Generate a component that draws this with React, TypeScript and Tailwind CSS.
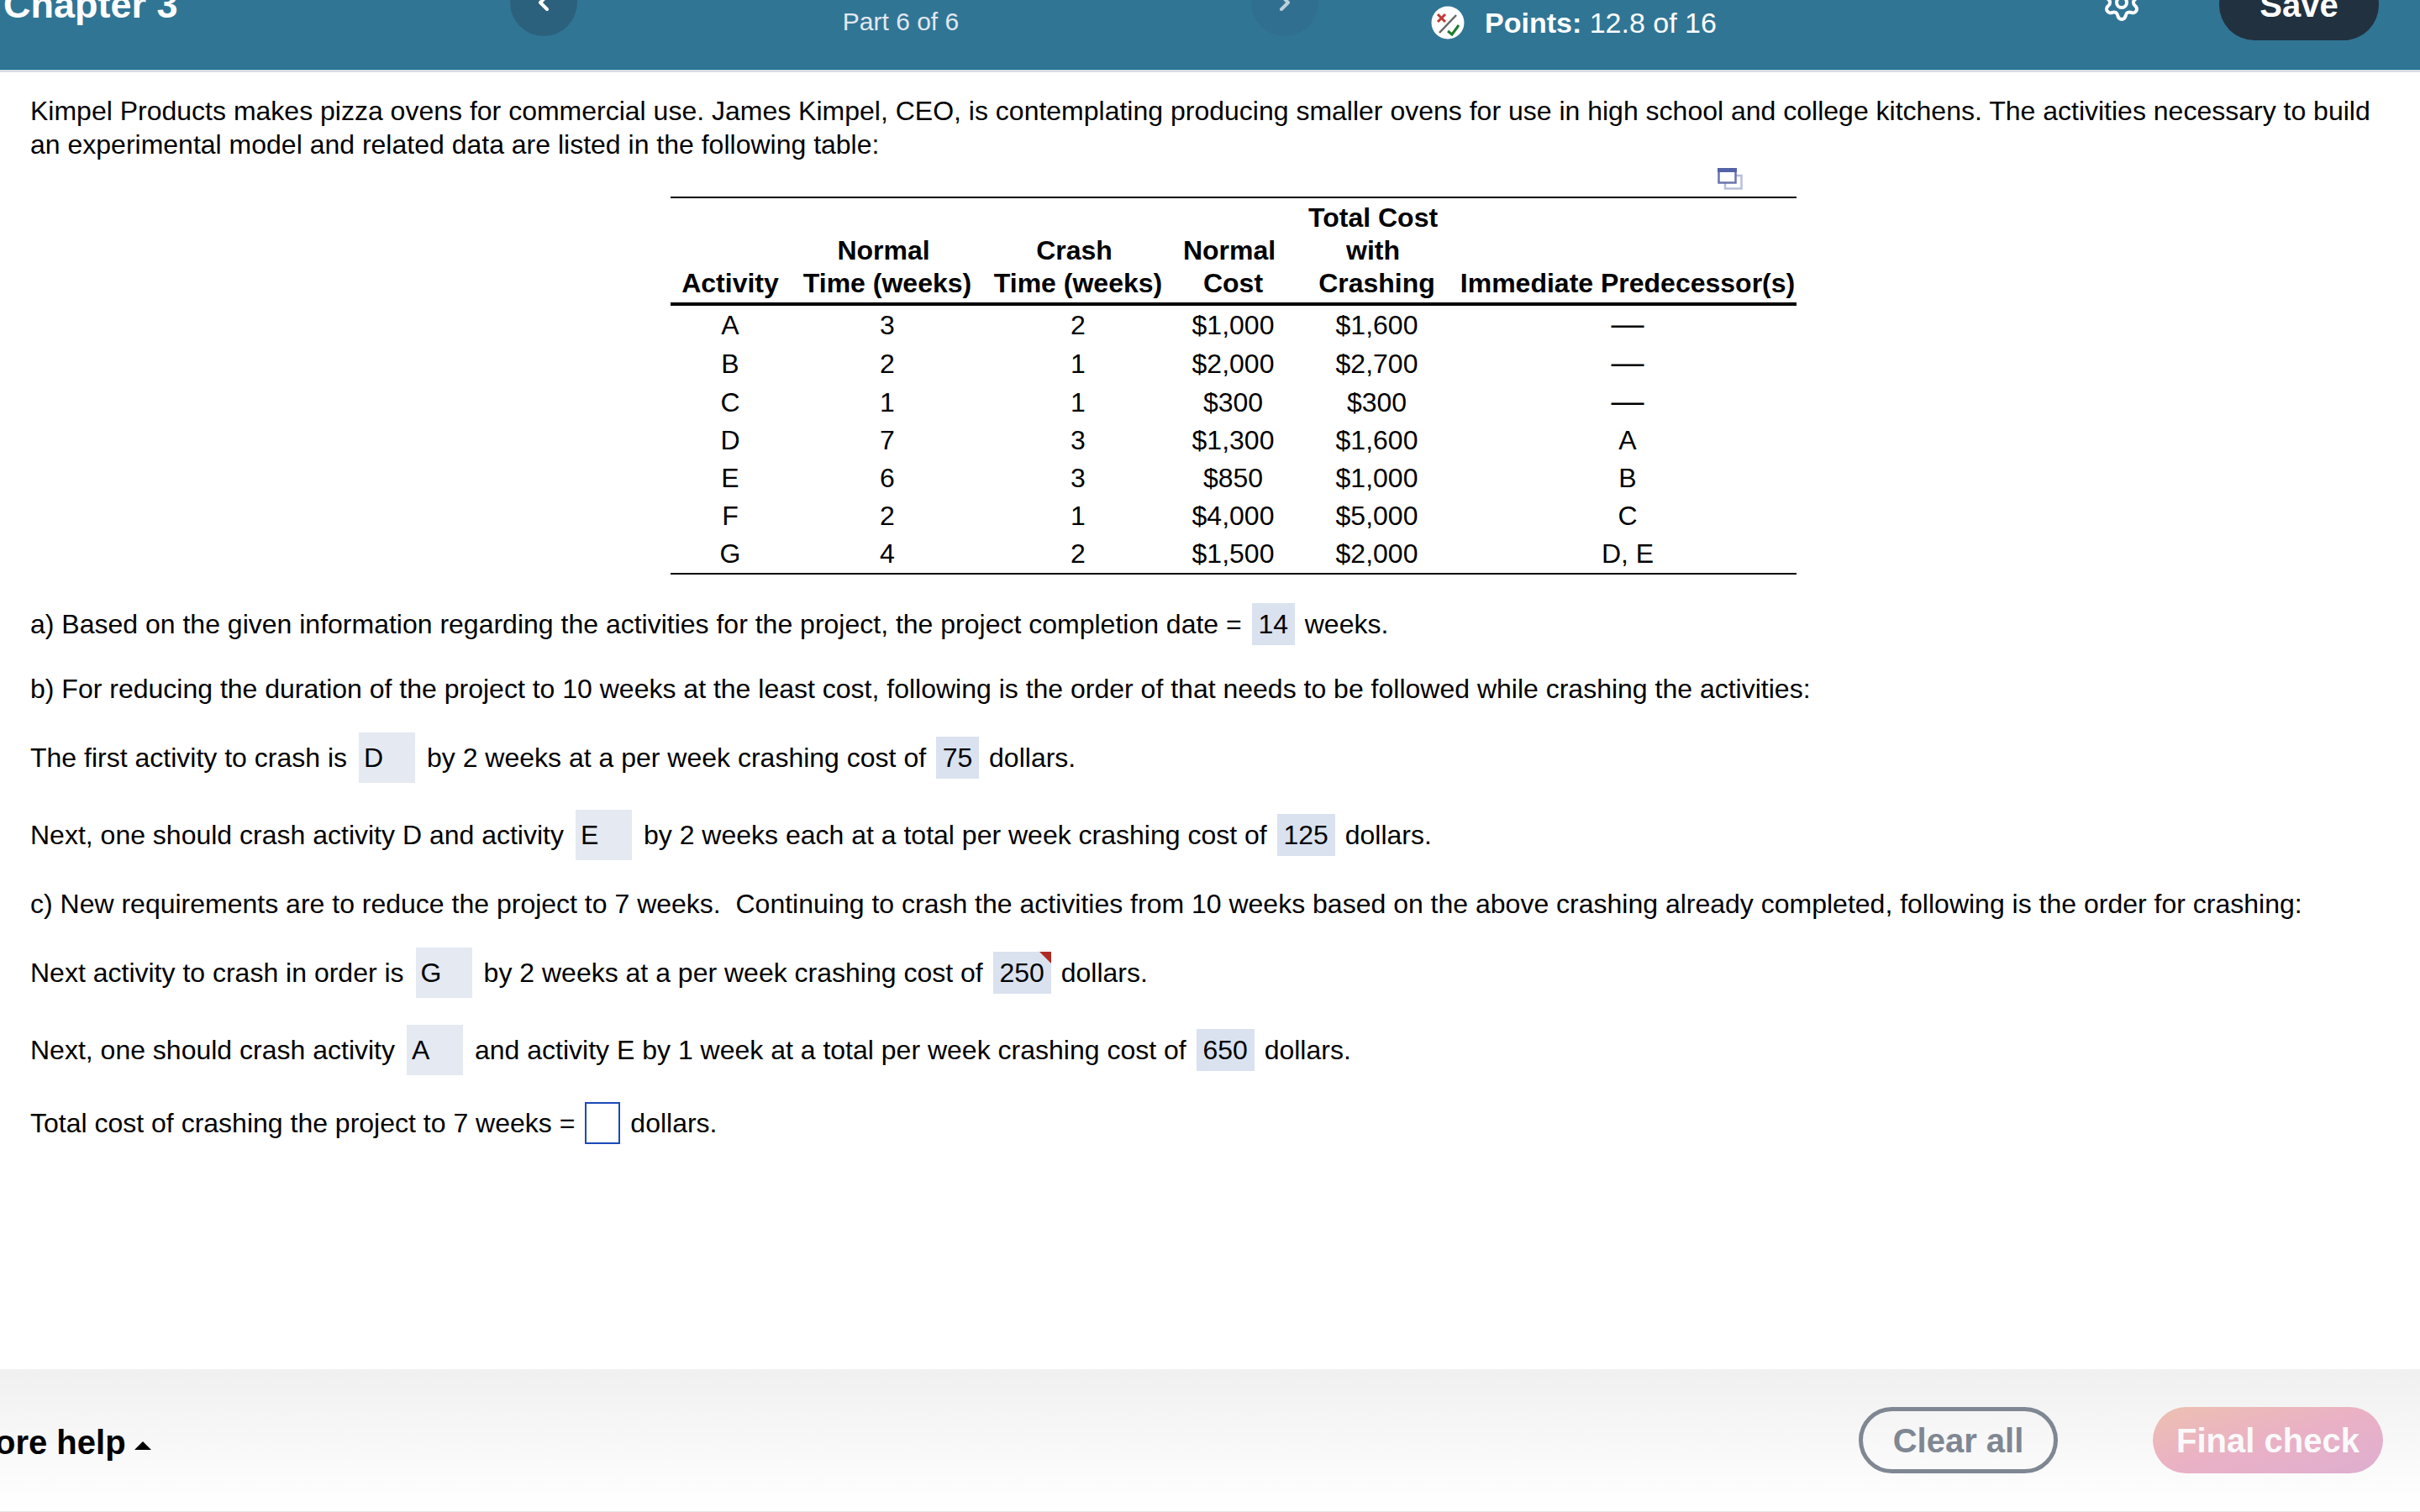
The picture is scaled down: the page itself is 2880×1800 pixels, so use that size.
import type { ReactNode } from "react";
import { ChevronLeft, ChevronRight, Settings } from "lucide-react";

const activities = [
  { id: "A", normal: 3, crash: 2, cost: "$1,000", crashCost: "$1,600", pred: "—" },
  { id: "B", normal: 2, crash: 1, cost: "$2,000", crashCost: "$2,700", pred: "—" },
  { id: "C", normal: 1, crash: 1, cost: "$300", crashCost: "$300", pred: "—" },
  { id: "D", normal: 7, crash: 3, cost: "$1,300", crashCost: "$1,600", pred: "A" },
  { id: "E", normal: 6, crash: 3, cost: "$850", crashCost: "$1,000", pred: "B" },
  { id: "F", normal: 2, crash: 1, cost: "$4,000", crashCost: "$5,000", pred: "C" },
  { id: "G", normal: 4, crash: 2, cost: "$1,500", crashCost: "$2,000", pred: "D, E" },
];

function Header() {
  return (
    <header className="h-[83px] overflow-hidden border-b border-[#0f6f90] bg-[#317595] text-white shadow-[0_3px_0_#dadce4]">
      <div className="-mt-[42px] grid h-[90px] grid-cols-[607fr_962fr_1311fr] items-center">
        <h1 className="pl-1 pt-1 text-[45px] font-bold leading-none">Chapter 3</h1>

        <nav className="flex items-center justify-between">
          <button
            aria-label="Previous part"
            className="grid h-20 w-20 place-items-center rounded-full bg-[#2c617d]"
          >
            <ChevronLeft className="h-8 w-8" strokeWidth={3} />
          </button>
          <p className="pr-8 pt-[46px] text-[30px] leading-none text-[#e1e8f1]">
            Part 6 of 6
          </p>
          <button
            aria-label="Next part"
            className="grid h-20 w-20 place-items-center rounded-full bg-[#306f8f] text-[#b9d0dc]"
          >
            <ChevronRight className="h-8 w-8" strokeWidth={3} />
          </button>
        </nav>

        <div className="flex h-full items-center justify-between pl-[134px] pr-[49px]">
          <div className="flex items-center gap-6 pt-[47px]">
            <PointsIcon />
            <p className="text-[34px] leading-none">
              <b>Points:</b> 12.8 of 16
            </p>
          </div>
          <div className="flex h-full items-center gap-[92px]">
            <button aria-label="Settings">
              <Settings className="h-12 w-12" strokeWidth={2} />
            </button>
            <button className="h-[84px] w-[190px] self-end rounded-full bg-[#213140] text-[40px] font-bold leading-none">
              Save
            </button>
          </div>
        </div>
      </div>
    </header>
  );
}

function PointsIcon() {
  return (
    <svg viewBox="0 0 40 40" className="h-10 w-10" fill="none" aria-hidden="true">
      <circle cx="20" cy="20" r="19.5" fill="#fff" />
      <path d="M10 32 30 11" stroke="#666" strokeWidth="2.5" />
      <path d="m8 10 9 9m0-9-9 9" stroke="#c03a35" strokeWidth="3" />
      <path d="m20 30 5 4 8-11" stroke="#1f7d2f" strokeWidth="3" />
    </svg>
  );
}

function PopupIcon() {
  return (
    <svg viewBox="0 0 30 26" className="h-[26px] w-[30px]" fill="none" aria-hidden="true">
      <rect x="9" y="9" width="19.5" height="15.5" fill="#fff" stroke="#b9bedd" strokeWidth="2.5" />
      <rect x="1.5" y="1.5" width="20" height="16" fill="#fff" stroke="#6a74b0" strokeWidth="2.5" />
      <path d="M0 2.5h23" stroke="#5462a6" strokeWidth="5" />
    </svg>
  );
}

function ActivityTable() {
  return (
    <div className="flex flex-col items-center pl-14">
      <div>
        <div className="flex h-[42px] items-center justify-end pr-16">
          <button aria-label="Open table in a new window">
            <PopupIcon />
          </button>
        </div>
        <table className="w-[1340px] table-fixed border-separate border-spacing-0 border-y-2 border-black text-center">
          <colgroup>
            <col className="w-[142px]" />
            <col className="w-[232px]" />
            <col className="w-[222px]" />
            <col className="w-[147px]" />
            <col className="w-[195px]" />
            <col className="w-[402px]" />
          </colgroup>
          <thead>
            <tr className="whitespace-nowrap align-bottom leading-[39px] [&>th]:border-b-4 [&>th]:border-black [&>th]:px-0 [&>th]:pb-[3px] [&>th]:pt-1">
              <th>Activity</th>
              <th>
                Normal&nbsp;
                <br />
                Time (weeks)
              </th>
              <th>
                Crash&nbsp;
                <br />
                Time (weeks)
              </th>
              <th>
                Normal&nbsp;
                <br />
                Cost
              </th>
              <th>
                Total Cost&nbsp;
                <br />
                with&nbsp;
                <br />
                Crashing
              </th>
              <th>Immediate Predecessor(s)</th>
            </tr>
          </thead>
          <tbody>
            {activities.map((a) => (
              <tr
                key={a.id}
                className={
                  a.pred === "—"
                    ? "h-[46px] leading-[39px] [&>td]:p-0"
                    : "h-[45px] leading-[39px] [&>td]:p-0"
                }
              >
                <td>{a.id}</td>
                <td>{a.normal}</td>
                <td>{a.crash}</td>
                <td>{a.cost}</td>
                <td>{a.crashCost}</td>
                <td>
                  {a.pred === "—" ? (
                    <span className="text-[39px] leading-none">{a.pred}</span>
                  ) : (
                    a.pred
                  )}
                </td>
              </tr>
            ))}
          </tbody>
        </table>
      </div>
    </div>
  );
}

function Row({ children }: { children: ReactNode }) {
  return <div className="flex items-center gap-3 leading-10">{children}</div>;
}

function Answer({ id, value, wrong }: { id: string; value: string; wrong?: boolean }) {
  return (
    <span className="relative flex">
      <input
        id={id}
        defaultValue={value}
        className={
          value.length > 2
            ? "h-[50px] w-[69px] bg-[#dae2ef] text-center"
            : "h-[50px] w-[51px] bg-[#dae2ef] text-center"
        }
      />
      {wrong && (
        <svg viewBox="0 0 14 14" className="absolute right-0 top-0 h-3.5 w-3.5" aria-hidden="true">
          <path d="M0 0h14v14z" fill="#b02a25" />
        </svg>
      )}
    </span>
  );
}

function Choice({ id, value }: { id: string; value: string }) {
  return (
    <select
      id={id}
      defaultValue={value}
      className="mx-0.5 h-[60px] w-[67px] appearance-none bg-[#e4e9f2] pl-1.5"
    >
      {activities.map((a) => (
        <option key={a.id}>{a.id}</option>
      ))}
    </select>
  );
}

function Questions() {
  return (
    <div className="mt-[34px] flex flex-col gap-8">
      <Row>
        <label htmlFor="completion">
          a) Based on the given information regarding the activities for the project, the project
          completion date =
        </label>
        <Answer id="completion" value="14" />
        <span>weeks.</span>
      </Row>
      <p className="leading-10">
        b) For reducing the duration of the project to 10 weeks at the least cost, following is the
        order of that needs to be followed while crashing the activities:
      </p>
      <Row>
        <label htmlFor="first">The first activity to crash is</label>
        <Choice id="first" value="D" />
        <label htmlFor="first-cost">by 2 weeks at a per week crashing cost of</label>
        <Answer id="first-cost" value="75" />
        <span>dollars.</span>
      </Row>
      <Row>
        <label htmlFor="second">Next, one should crash activity D and activity</label>
        <Choice id="second" value="E" />
        <label htmlFor="second-cost">by 2 weeks each at a total per week crashing cost of</label>
        <Answer id="second-cost" value="125" />
        <span>dollars.</span>
      </Row>
      <p className="leading-10">
        c) New requirements are to reduce the project to 7 weeks.&nbsp; Continuing to crash the
        activities from 10 weeks based on the above crashing already completed, following is the
        order for crashing:
      </p>
      <Row>
        <label htmlFor="third">Next activity to crash in order is</label>
        <Choice id="third" value="G" />
        <label htmlFor="third-cost">by 2 weeks at a per week crashing cost of</label>
        <Answer id="third-cost" value="250" wrong />
        <span>dollars.</span>
      </Row>
      <Row>
        <label htmlFor="fourth">Next, one should crash activity</label>
        <Choice id="fourth" value="A" />
        <label htmlFor="fourth-cost">
          and activity E by 1 week at a total per week crashing cost of
        </label>
        <Answer id="fourth-cost" value="650" />
        <span>dollars.</span>
      </Row>
      <Row>
        <label htmlFor="total">Total cost of crashing the project to 7 weeks =</label>
        <input id="total" className="h-[50px] w-[42px] border-2 border-[#1c49b8] bg-white" />
        <span>dollars.</span>
      </Row>
    </div>
  );
}

function Footer() {
  return (
    <footer className="flex h-[170px] items-center justify-between overflow-hidden border-b border-[#e6e6e6] bg-linear-to-b from-[#f0f0f0] to-white pr-11 text-[40px] font-bold">
      <button className="-ml-1.5 flex items-center gap-2.5 pt-1">
        ore help
        <svg viewBox="0 0 20 10" className="mt-2 h-2.5 w-5" aria-hidden="true">
          <path d="M0 10 10 0l10 10z" />
        </svg>
      </button>
      <div className="flex gap-[113px]">
        <button className="h-[79px] w-[237px] rounded-full border-[5px] border-[#7f8793] leading-none text-[#7f8793]">
          Clear all
        </button>
        <button className="h-[79px] w-[274px] rounded-full bg-linear-to-br from-[#edc0b0] via-[#eab1c5] to-[#deaed0] leading-none text-[#fafafa]">
          Final check
        </button>
      </div>
    </footer>
  );
}

export default function App() {
  return (
    <div className="flex min-h-screen flex-col bg-white font-['Liberation_Sans',Arial,sans-serif] text-[32px] text-black">
      <Header />
      <main className="flex-1 px-9 pt-[29px]">
        <p className="leading-10">
          Kimpel Products makes pizza ovens for commercial use. James Kimpel, CEO, is contemplating
          producing smaller ovens for use in high school and college kitchens. The activities
          necessary to build an experimental model and related data are listed in the following
          table:
        </p>
        <ActivityTable />
        <Questions />
      </main>
      <Footer />
    </div>
  );
}
